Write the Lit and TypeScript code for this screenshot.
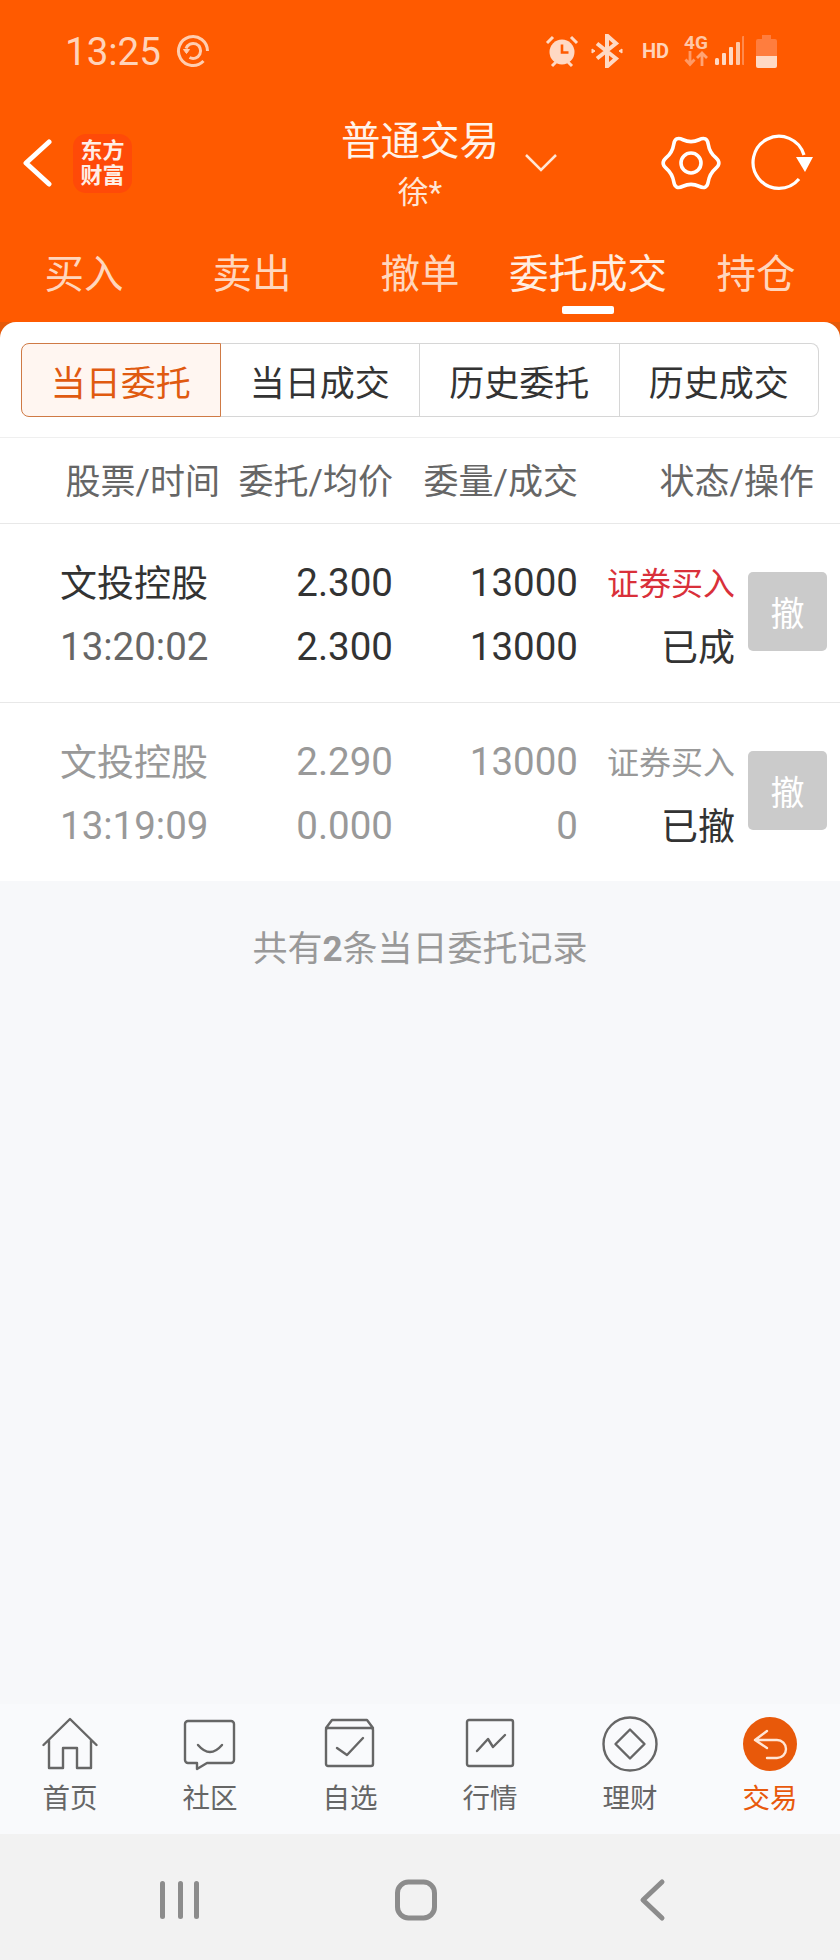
import { LitElement, html, css, svg } from "lit";
import { customElement } from "lit/decorators.js";

const gearPath = (() => {
  const c: [number, number][] = [
    [-31, 0], [-18.5, -10.7], [-16, -27], [0, -19.5], [16, -27], [18.5, -10.7],
    [31, 0], [18.5, 10.7], [16, 27], [0, 19.5], [-16, 27], [-18.5, 10.7],
  ];
  const p = c.map(([x, y]) => [x + 31, y + 31] as [number, number]);
  const mid = (a: [number, number], b: [number, number]) => `${(a[0] + b[0]) / 2} ${(a[1] + b[1]) / 2}`;
  let d = `M${mid(p[p.length - 1], p[0])}`;
  p.forEach((pt, i) => {
    d += `Q${pt[0]} ${pt[1]} ${mid(pt, p[(i + 1) % p.length])}`;
  });
  return d + "Z";
})();

interface Order {
  name: string; time: string; price: string; avg: string; qty: string; done: string; status: string; muted: boolean;
}
const orders: Order[] = [
  { name: "文投控股", time: "13:20:02", price: "2.300", avg: "2.300", qty: "13000", done: "13000", status: "已成", muted: false },
  { name: "文投控股", time: "13:19:09", price: "2.290", avg: "0.000", qty: "13000", done: "0", status: "已撤", muted: true },
];

const navItems = [
  { label: "首页", icon: svg`<path d="M1.500 29 28 3l26.500 26M7 24v28h14V32h14v20h14V24"/>` },
  { label: "社区", icon: svg`<path d="M6 5h43a3 3 0 0 1 3 3v36a3 3 0 0 1-3 3H25l-10 6v-6H6a3 3 0 0 1-3-3V8a3 3 0 0 1 3-3Z"/><path d="M16 29q12 14 24 0"/>` },
  { label: "自选", icon: svg`<path d="M4 12l6-8h35l6 8M6 12h43a2 2 0 0 1 2 2v34a2 2 0 0 1-2 2H6a2 2 0 0 1-2-2V14a2 2 0 0 1 2-2Z"/><path d="M15 32l10 7 16-17"/>` },
  { label: "行情", icon: svg`<rect x="5" y="4" width="46" height="46" rx="2"/><path d="M15 35l11-12 5 8 12-12"/>` },
  { label: "理财", icon: svg`<circle cx="28" cy="28" r="26.500"/><path d="M28 13.500 42.500 28 28 42.500 13.500 28Z" stroke-linejoin="round"/>` },
];

@customElement("app-root")
export class AppRoot extends LitElement {
  static styles = css`
    :host {
      display: flex; flex-direction: column; width: 840px; height: 1960px;
      font-family: Roboto, "Noto Sans CJK SC", sans-serif; background: #f7f8fa; color: #333; overflow: hidden;
    }
    svg { display: block; flex: none; }
    .top { background: #ff5a00; color: #fff; }
    .status { height: 100px; display: flex; align-items: center; padding: 2px 0 0 65px; box-sizing: border-box; }
    .time { font-size: 38.500px; color: #ffd3ba; line-height: 44px; margin: 2px 15px 0 0; }
    .sicons { margin-left: auto; margin-right: 63px; display: flex; align-items: center; }
    .hd { font-size: 20px; font-weight: 700; color: #ffd3ba; margin: 0 15px 0 19px; line-height: 20px; width: 26px; }
    .net { display: flex; flex-direction: column; align-items: center; width: 26px; }
    .net span { font-size: 19px; font-weight: 700; color: #ffc7a6; line-height: 15px; }
    .nav { height: 120px; display: grid; grid-template-columns: 1fr auto 1fr; }
    .nav-left { display: flex; align-items: center; padding: 6px 0 0 22px; }
    .logo {
      width: 59px; height: 59px; margin-left: 19px; border-radius: 13px; background: #ff4a08; color: #ffeee6;
      font-size: 22px; font-weight: 700; line-height: 25px; text-align: center; display: flex; flex-direction: column; justify-content: center;
    }
    .title { text-align: center; padding-top: 20px; }
    .t1 { font-size: 39.500px; line-height: 44px; color: #fff3ea; }
    .t2 { font-size: 31px; line-height: 40px; margin-top: 9px; color: #ffe6d6; }
    .nav-right { display: flex; align-items: center; padding: 6px 24px 0 25px; }
    .spacer { flex: 1; }
    .gear { margin-right: 28px; }
    .tabs { height: 102px; display: grid; grid-template-columns: repeat(5, 168px); }
    .tab { display: flex; flex-direction: column; align-items: center; padding-top: 32px; font-size: 39.500px; line-height: 46px; color: #ffd6bd; white-space: nowrap; }
    .tab.on { color: #ffeee2; }
    .bar { width: 52px; height: 8px; margin-top: 8px; border-radius: 2px; background: #fff; }
    .main { flex: 1; background: #e55a0a; display: flex; flex-direction: column; }
    .panel { background: #fff; border-radius: 16px 16px 0 0; }
    .segs { margin: 21px 21px 20px; height: 74px; display: grid; grid-template-columns: repeat(4, 1fr); }
    .seg { display: flex; align-items: center; justify-content: center; font-size: 35px; border: 1.500px solid #d6d6d6; border-left: none; color: #333; }
    .seg:first-child { border-left: 1.500px solid #d6d6d6; border-radius: 8px 0 0 8px; }
    .seg:last-child { border-radius: 0 8px 8px 0; }
    .seg.on { color: #e05a10; background: #fff6f1; border-color: #cf7a45; }
    .thead {
      height: 87px; padding-bottom: 4px; box-sizing: border-box; display: grid; grid-template-columns: 220px 173px 185px 236px; align-items: center;
      border-top: 1px solid #efefef; border-bottom: 1px solid #e8e8e8; font-size: 35px; color: #666; text-align: right; white-space: nowrap;
    }
    .row {
      height: 179px; box-sizing: border-box; padding: 0 13px 0 60px; display: grid; align-content: center; align-items: center;
      grid-template-columns: 160px 173px 185px 157px 1fr; grid-auto-rows: 64px; font-size: 37px; text-align: right; white-space: nowrap; border-bottom: 1px solid #e8e8e8;
    }
    .row:last-child { border-bottom: none; height: 178px; }
    .row .l { text-align: left; }
    .num { font-size: 38.500px; padding-top: 3px; }
    .row .time-cell { color: #666; }
    .type { font-size: 32px; color: #d9303a; }
    .muted .c, .row.muted .time-cell { color: #999; }
    .muted .type { color: #999; }
    .btn {
      grid-column: 5; grid-row: 1 / span 2; justify-self: end; align-self: start; margin-top: 23px; width: 79px; height: 79px; border-radius: 5px; background: #cbcbcb; color: #fff;
      display: flex; align-items: center; justify-content: center; font-size: 34px;
    }
    .foot { background: #f7f8fa; flex: 1; display: flex; flex-direction: column; }
    .count { text-align: center; font-size: 35px; line-height: 50px; color: #999; padding-top: 44px; }
    .count b { font-weight: 700; }
    .fill { flex: 1; }
    .bottom { height: 130px; display: grid; grid-template-columns: repeat(6, 140px); background: #f9fafc; box-sizing: border-box; padding-top: 12px; }
    .item { display: flex; flex-direction: column; align-items: center; font-size: 27.500px; line-height: 36px; color: #666; }
    .item svg { fill: none; stroke: #666; stroke-width: 2.400; stroke-linecap: round; stroke-linejoin: round; margin-bottom: 9px; }
    .item.on { color: #e8590c; }
    .sys { height: 126px; box-sizing: border-box; background: #f2f2f2; display: flex; align-items: center; padding: 6px 0 0 156px; gap: 188px; }
  `;

  private statusIcons() {
    return html`<div class="sicons">
      <svg width="34" height="34" viewBox="0 0 34 34">
        <circle cx="17" cy="18" r="12.500" fill="#ffd9c4"/>
        <path d="M17 10.500v8h6.500" fill="none" stroke="#ff5a00" stroke-width="2.600"/>
        <path d="M2 9l6-6M32 9l-6-6M7 32l4-4M27 32l-4-4" stroke="#ffd9c4" stroke-width="3" fill="none"/>
      </svg>
      <svg style="margin-left:12px" width="32" height="34" viewBox="0 0 32 34">
        <path d="M6 9.500l19 15-9 8V1.500l9 8-19 15" fill="none" stroke="#ffd9c4" stroke-width="4"/>
        <path d="M1 15l3 2-3 2ZM31 15l-3 2 3 2Z" fill="#ffd9c4" stroke="#ffd9c4"/>
      </svg>
      <span class="hd">HD</span>
      <div class="net">
        <span>4G</span>
        <svg width="24" height="17" viewBox="0 0 24 17">
          <path d="M6 1v13M1.500 9.500 6 14.500l4.500-5" fill="none" stroke="#ff9a66" stroke-width="2.800"/>
          <path d="M18 16V3M13 8l5-5 5 5" fill="none" stroke="#ffa475" stroke-width="2.800"/>
        </svg>
      </div>
      <svg style="margin-left:5px" width="30" height="30" viewBox="0 0 30 30">
        <rect x="1" y="22" width="4" height="7" rx="1.500" fill="#ffd9c4"/>
        <rect x="8" y="17" width="4" height="12" rx="1" fill="#ffd9c4"/>
        <rect x="15" y="11" width="4" height="18" rx="1" fill="#ffd9c4"/>
        <rect x="22" y="6" width="4" height="23" rx="1" fill="#ffc7a6"/>
        <rect x="28" y="0" width="2.500" height="29" rx="1" fill="#ff8a4d"/>
      </svg>
      <svg style="margin-left:12px" width="21" height="33" viewBox="0 0 21 33">
        <path d="M6 0h9v4h4a2 2 0 0 1 2 2v15H0V6a2 2 0 0 1 2-2h4Z" fill="#ff7d3e"/>
        <path d="M0 21h21v10a2 2 0 0 1-2 2H2a2 2 0 0 1-2-2Z" fill="#ffd9c4"/>
      </svg>
    </div>`;
  }

  render() {
    return html`
      <div class="top">
        <div class="status">
          <span class="time">13:25</span>
          <svg width="34" height="34" viewBox="0 0 34 34" fill="none" stroke="#ffcdb0" stroke-width="3">
            <path d="M27.500 27A14.500 14.500 0 1 1 31.500 17"/>
            <path d="M10 14.500A7.500 7.500 0 1 1 13.500 23.500"/>
            <path d="M7.500 15.500h6l-3 4Z" fill="#ffcdb0" stroke-width="1"/>
          </svg>
          ${this.statusIcons()}
        </div>
        <div class="nav">
          <div class="nav-left">
            <svg width="32" height="48" viewBox="0 0 32 48" fill="none" stroke="#fff" stroke-width="5" stroke-linecap="round">
              <path d="M27 3 4 24l23 21" stroke-linejoin="round"/>
            </svg>
            <div class="logo"><div>东方</div><div>财富</div></div>
          </div>
          <div class="title"><div class="t1">普通交易</div><div class="t2">徐*</div></div>
          <div class="nav-right">
            <svg width="34" height="20" viewBox="0 0 34 20" fill="none" stroke="#ffe6d6" stroke-width="2.500"><path d="M2 2l15 15L32 2"/></svg>
            <span class="spacer"></span>
            <svg class="gear" width="62" height="62" viewBox="0 0 62 62" fill="none" stroke="#fff" stroke-width="3.600">
              <path d=${gearPath}/><circle cx="31" cy="31" r="10"/>
            </svg>
            <svg width="66" height="66" viewBox="0 0 66 66" fill="none" stroke="#fff" stroke-width="3.200">
              <path d="M49 49A26 26 0 1 1 54 25"/>
              <path d="M46 27h17l-8 15Z" fill="#fff" stroke="none"/>
            </svg>
          </div>
        </div>
        <div class="tabs">
          <div class="tab">买入</div>
          <div class="tab">卖出</div>
          <div class="tab">撤单</div>
          <div class="tab on">委托成交<div class="bar"></div></div>
          <div class="tab">持仓</div>
        </div>
      </div>
      <div class="main">
        <div class="panel">
          <div class="segs">
            <div class="seg on">当日委托</div>
            <div class="seg">当日成交</div>
            <div class="seg">历史委托</div>
            <div class="seg">历史成交</div>
          </div>
          <div class="thead"><div>股票/时间</div><div>委托/均价</div><div>委量/成交</div><div>状态/操作</div></div>
          ${orders.map(
            (o) => html`<div class="row ${o.muted ? "muted" : ""}">
              <div class="c l">${o.name}</div><div class="c num">${o.price}</div><div class="c num">${o.qty}</div><div class="type">证券买入</div>
              <div class="btn">撤</div>
              <div class="time-cell l num">${o.time}</div><div class="c num">${o.avg}</div><div class="c num">${o.done}</div><div>${o.status}</div>
            </div>`
          )}
        </div>
        <div class="foot">
          <div class="count">共有<b>2</b>条当日委托记录</div>
          <div class="fill"></div>
          <div class="bottom">
            ${navItems.map(
              (n) => html`<div class="item"><svg width="56" height="56" viewBox="0 0 56 56">${n.icon}</svg>${n.label}</div>`
            )}
            <div class="item on">
              <svg width="56" height="56" viewBox="0 0 56 56">
                <circle cx="28" cy="28" r="27" fill="#e8590a" stroke="none"/>
                <path d="M25 15 13 24l12 8M13 24h22a9 9 0 0 1 0 18H25" stroke="#ffe6d6"/>
              </svg>交易
            </div>
          </div>
        </div>
      </div>
      <div class="sys">
        <svg width="48" height="44" viewBox="0 0 48 44" fill="#8c8c8c">
          <rect x="4" y="3" width="5" height="38" rx="2.500"/><rect x="22" y="3" width="5" height="38" rx="2.500"/><rect x="38" y="3" width="5" height="38" rx="2.500"/>
        </svg>
        <svg width="48" height="44" viewBox="0 0 48 44" fill="none" stroke="#8c8c8c" stroke-width="5">
          <rect x="5.500" y="4" width="37" height="36" rx="11"/>
        </svg>
        <svg width="48" height="44" viewBox="0 0 48 44" fill="none" stroke="#8c8c8c" stroke-width="5" stroke-linecap="round" stroke-linejoin="round">
          <path d="M34 4 15 22l19 18"/>
        </svg>
      </div>
    `;
  }
}
